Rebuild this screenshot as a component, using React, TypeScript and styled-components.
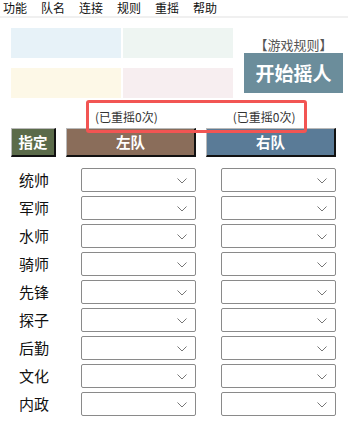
import React from "react";
import styled, { createGlobalStyle } from "styled-components";

const Global = createGlobalStyle`
  html, body { margin: 0; padding: 0; background: #fff; }
  body { font-family: "Noto Sans CJK SC", "Noto Sans", sans-serif; color: #111; }
  * { box-sizing: border-box; }
`;

const Page = styled.div`
  position: relative;
  width: 348px;
  height: 430px;
  overflow: hidden;
`;

const MenuBar = styled.nav`
  display: flex;
  align-items: flex-start;
  gap: 14px;
  height: 18px;
  padding-left: 3px;
  border-bottom: 2px solid #f0f0f0;
  font-size: 12px;
  line-height: 15px;
`;

const MenuItem = styled.span`
  color: #111;
`;

const Top = styled.section`
  display: flex;
  padding: 10px 0 0 11px;
  height: 80px;
`;

const Swatches = styled.div`
  display: grid;
  grid-template-columns: 110px 110px;
  grid-template-rows: 30px 30px;
  column-gap: 2px;
  row-gap: 10px;
`;

const Swatch = styled.div<{ $c: string }>`
  background: ${(p) => p.$c};
`;

const Side = styled.div`
  display: flex;
  flex-direction: column;
  align-items: center;
  margin-left: 11px;
  width: 99px;
`;

const RulesLink = styled.div`
  margin-top: 8px;
  height: 17px;
  font-size: 13px;
  line-height: 17px;
  color: #555;
  white-space: nowrap;
`;

const StartButton = styled.div`
  width: 99px;
  height: 40px;
  background: #6b8d9b;
  color: #fff;
  font-weight: 700;
  font-size: 19px;
  line-height: 40px;
  text-align: center;
`;

const Counts = styled.div`
  display: flex;
  gap: 75px;
  padding-left: 95px;
  height: 30px;
  padding-top: 11px;
  font-size: 12px;
  line-height: 15px;
  color: #333;
`;

const ButtonRow = styled.div`
  display: flex;
  gap: 10px;
  padding-left: 11px;
  height: 29px;
`;

const TeamButton = styled.div<{ $bg: string; $w: number }>`
  width: ${(p) => p.$w}px;
  height: 29px;
  background: ${(p) => p.$bg};
  border-top: 1px solid #b9b9b9;
  border-left: 1px solid #b9b9b9;
  border-right: 2px solid #111;
  border-bottom: 2px solid #111;
  color: #fff;
  font-weight: 700;
  font-size: 14.5px;
  line-height: 25px;
  text-align: center;
`;

const Rows = styled.div`
  display: flex;
  flex-direction: column;
  gap: 4px;
  margin-top: 11px;
  padding-left: 19px;
`;

const Row = styled.div`
  display: grid;
  grid-template-columns: 37px 115px 115px;
  column-gap: 25px;
  align-items: center;
  height: 24px;
`;

const Label = styled.span`
  font-size: 15px;
  line-height: 18px;
  color: #111;
  white-space: nowrap;
`;

const SelectBox = styled.div`
  position: relative;
  height: 24px;
  border: 1px solid #8a8a8a;
  border-radius: 2px;
  background: #fff;
`;

const Chevron = styled.svg`
  position: absolute;
  right: 8px;
  top: 9px;
`;

const Highlight = styled.div`
  position: absolute;
  left: 86px;
  top: 100px;
  width: 221px;
  height: 33px;
  border: 3px solid #f25553;
  border-radius: 3px;
  pointer-events: none;
`;

const Select = () => (
  <SelectBox>
    <Chevron width="10" height="6" viewBox="0 0 10 6">
      <path d="M0.5 0.5 L5 5 L9.5 0.5" fill="none" stroke="#777" strokeWidth="1" />
    </Chevron>
  </SelectBox>
);

const roles = ["统帅", "军师", "水师", "骑师", "先锋", "探子", "后勤", "文化", "内政"];
const menus = ["功能", "队名", "连接", "规则", "重摇", "帮助"];

export default function App() {
  return (
    <Page>
      <Global />
      <MenuBar>
        {menus.map((m) => (
          <MenuItem key={m}>{m}</MenuItem>
        ))}
      </MenuBar>
      <Top>
        <Swatches>
          <Swatch $c="#e7f2f8" />
          <Swatch $c="#eef5f2" />
          <Swatch $c="#fdf8e7" />
          <Swatch $c="#f7eef0" />
        </Swatches>
        <Side>
          <RulesLink>【游戏规则】</RulesLink>
          <StartButton>开始摇人</StartButton>
        </Side>
      </Top>
      <Counts>
        <span>(已重摇0次)</span>
        <span>(已重摇0次)</span>
      </Counts>
      <ButtonRow>
        <TeamButton $bg="#5b6b4a" $w={45}>指定</TeamButton>
        <TeamButton $bg="#8a6d5a" $w={130}>左队</TeamButton>
        <TeamButton $bg="#5a7b97" $w={130}>右队</TeamButton>
      </ButtonRow>
      <Rows>
        {roles.map((r) => (
          <Row key={r}>
            <Label>{r}</Label>
            <Select />
            <Select />
          </Row>
        ))}
      </Rows>
      <Highlight />
    </Page>
  );
}
